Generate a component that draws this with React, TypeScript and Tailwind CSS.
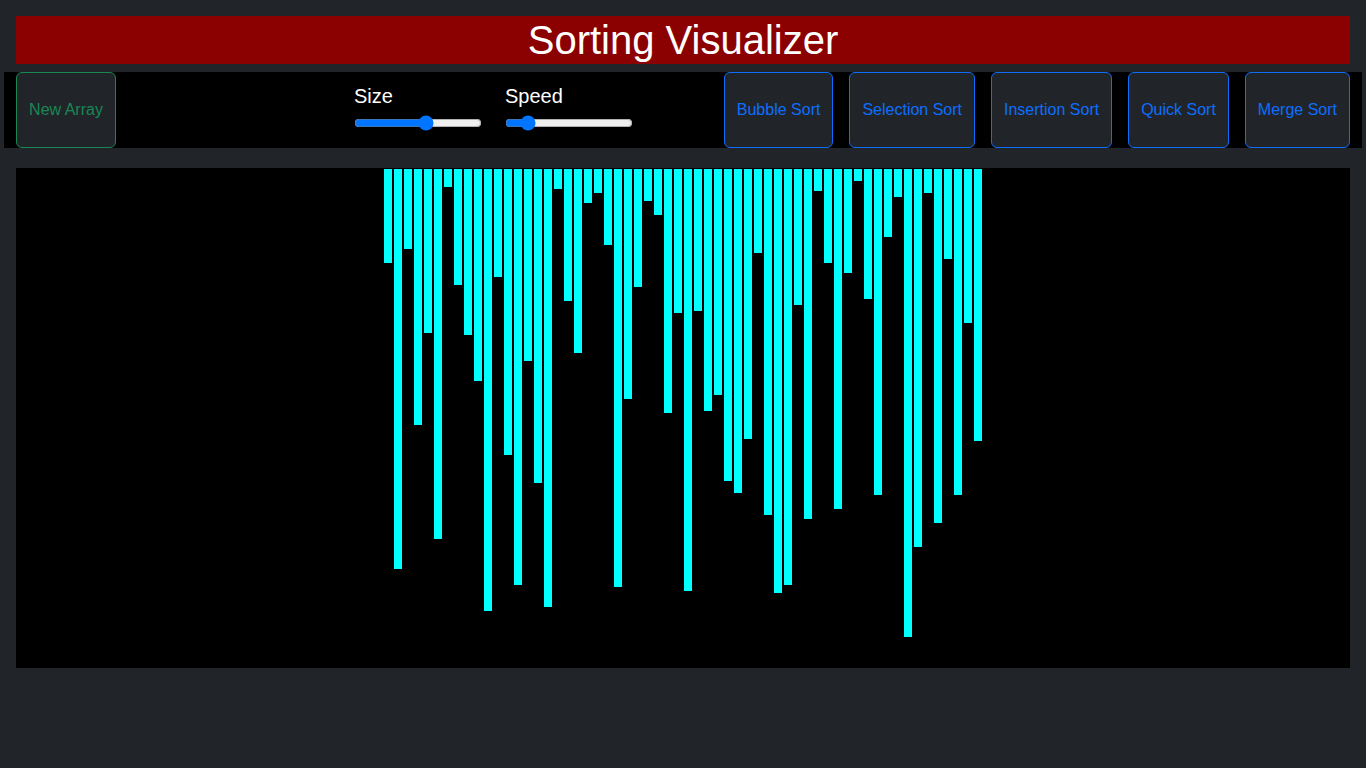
import { useState } from "react";

// bar heights in px, as drawn in the canvas
const bars = [
  94, 400, 80, 256, 164, 370, 18, 116, 166, 212, 442, 108, 286, 416, 192, 314,
  438, 20, 132, 184, 34, 24, 76, 418, 230, 118, 32, 46, 244, 144, 422, 142, 242,
  226, 312, 324, 270, 84, 346, 424, 416, 136, 350, 22, 94, 340, 104, 12, 130,
  326, 68, 28, 468, 378, 24, 354, 90, 326, 154, 272,
];

const algos = [
  "Bubble Sort",
  "Selection Sort",
  "Insertion Sort",
  "Quick Sort",
  "Merge Sort",
];

function Slider({
  label,
  value,
  onChange,
  className,
}: {
  label: string;
  value: number;
  onChange: (v: number) => void;
  className?: string;
}) {
  return (
    <div className={"flex flex-col items-start pt-3 " + (className ?? "")}>
      <span className="text-[20px] leading-6 text-white">{label}</span>
      <input
        type="range"
        min={0}
        max={100}
        value={value}
        onChange={(e) => onChange(Number(e.target.value))}
        className="m-0 mt-[7px] h-4 w-[128px]"
      />
    </div>
  );
}

export default function App() {
  const [size, setSize] = useState(57);
  const [speed, setSpeed] = useState(13);

  return (
    <div
      className="min-h-screen bg-[#212529] p-4"
      style={{ fontFamily: '"Liberation Sans", Arial, sans-serif' }}
    >
      <div className="h-12 bg-[#8b0000] text-center text-[40px] leading-[48px] text-white">
        Sorting Visualizer
      </div>

      <div className="-mx-3 mt-2 flex h-[76px] items-stretch bg-black px-3">
        <button className="w-[100px] rounded-md border border-[#198754] bg-[#212529] text-base text-[#198754]">
          New Array
        </button>

        <Slider label="Size" value={size} onChange={setSize} className="ml-[238px]" />
        <Slider label="Speed" value={speed} onChange={setSpeed} className="ml-[23px]" />

        <div className="ml-auto flex items-stretch gap-4">
          {algos.map((a) => (
            <button
              key={a}
              className="rounded-md border border-[#0d6efd] bg-[#212529] px-3 text-base text-[#0d6efd]"
            >
              {a}
            </button>
          ))}
        </div>
      </div>

      <div className="mt-5 flex h-[500px] justify-center bg-black">
        <div className="mt-px flex items-start">
          {bars.map((h, i) => (
            <div
              key={i}
              className="mx-px w-2 bg-[#00ffff]"
              style={{ height: h }}
            />
          ))}
        </div>
      </div>
    </div>
  );
}
